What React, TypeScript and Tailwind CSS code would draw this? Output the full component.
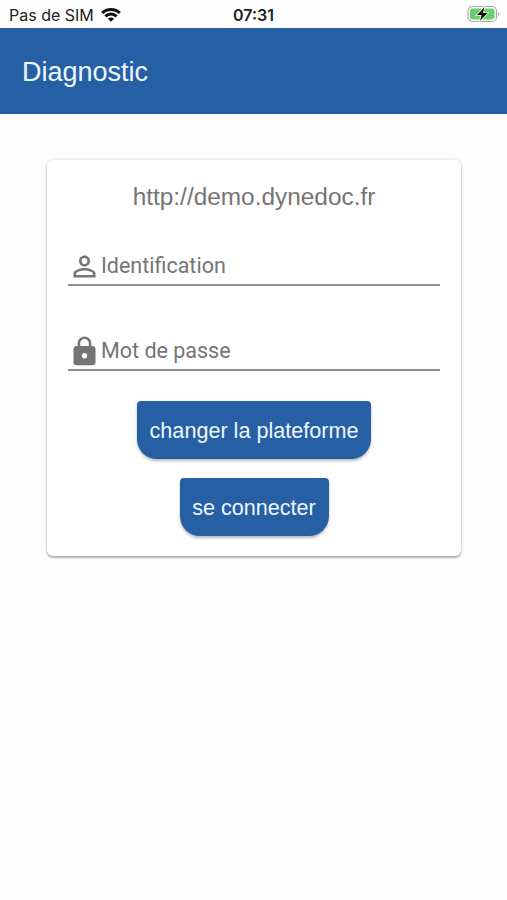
import type { ReactNode } from "react";
import { MdLock, MdPersonOutline } from "react-icons/md";

function WifiIcon() {
  return (
    <svg className="h-[15px] w-[20px]" viewBox="0 0 20 15" fill="none" stroke="#111" strokeWidth="3">
      <path d="M1.2 6C6 1.2 14 1.2 18.8 6" />
      <path d="M4.4 9.3C7.6 6.3 12.4 6.3 15.6 9.3" />
      <path d="M10 14.8 6.9 11.7C8.6 10.2 11.4 10.2 13.1 11.7Z" fill="#111" stroke="none" />
    </svg>
  );
}

function BatteryIcon() {
  return (
    <svg className="h-[18px] w-[34px]" viewBox="0 0 34 18">
      <rect x="1" y="1.5" width="28.5" height="15" rx="4.5" fill="#fff" stroke="#a9a9a9" strokeWidth="1.2" />
      <rect x="3" y="3.5" width="24.5" height="11" rx="2.4" fill="#68cf6b" />
      <path d="M31.2 6.8c1.6.8 1.6 3.6 0 4.4Z" fill="#a9a9a9" />
      <path d="M17.3 2.4 10 10h4.5l-1.5 5.8 7.6-7.8H16Z" fill="#111" stroke="#e8f7e8" strokeWidth="1.6" paintOrder="stroke" />
    </svg>
  );
}

function Field({ icon, label }: { icon: ReactNode; label: string }) {
  return (
    <div className="flex h-[38px] items-center border-b-2 border-[#8f8f8f] text-[#757575]">
      {icon}
      <span className="pb-px font-[Roboto,sans-serif] text-[21.5px] leading-none">{label}</span>
    </div>
  );
}

function ActionButton({ children, className }: { children: ReactNode; className: string }) {
  return (
    <button
      className={`h-[58px] rounded-t-[4px] rounded-b-[20px] bg-[#275fa4] pt-[3px] text-[21.6px] whitespace-nowrap text-[#edf7ff] shadow-[0_2px_3px_rgba(0,0,0,0.28)] ${className}`}
    >
      {children}
    </button>
  );
}

export default function App() {
  return (
    <main className="h-[900px] w-[507px] bg-[#fefefe] font-['Liberation_Sans',Arial,sans-serif]">
      <div className="grid h-7 grid-cols-3 items-center pr-[6px] pl-[9px] font-[Inter,sans-serif] text-[#222]">
        <div className="flex items-center gap-[7px] text-[16px] whitespace-nowrap">
          <span className="pt-px">Pas de SIM</span>
          <WifiIcon />
        </div>
        <span className="pt-px pr-[3px] text-center text-[16px] font-semibold">07:31</span>
        <div className="flex justify-end">
          <BatteryIcon />
        </div>
      </div>
      <header className="flex h-[86px] items-center bg-[#275fa4] pl-[22px]">
        <h1 className="pt-[2px] text-[27px] leading-none text-[#edf7ff]">Diagnostic</h1>
      </header>
      <section className="mt-[46px] ml-[47px] flex h-[396px] w-[414px] flex-col rounded-[6px] bg-white px-[21px] pt-[23px] shadow-[0_2px_2px_rgba(0,0,0,0.28),0_0_4px_rgba(0,0,0,0.14)]">
        <p className="text-center text-[24.4px] leading-7 whitespace-nowrap text-[#757575]">http://demo.dynedoc.fr</p>
        <div className="mt-[37px] flex flex-col gap-[47px]">
          <Field icon={<MdPersonOutline className="size-[33px]" />} label="Identification" />
          <Field icon={<MdLock className="size-[33px]" />} label="Mot de passe" />
        </div>
        <div className="mt-[30px] flex flex-col items-center gap-[19px]">
          <ActionButton className="w-[234px]">changer la plateforme</ActionButton>
          <ActionButton className="w-[149px]">se connecter</ActionButton>
        </div>
      </section>
    </main>
  );
}
